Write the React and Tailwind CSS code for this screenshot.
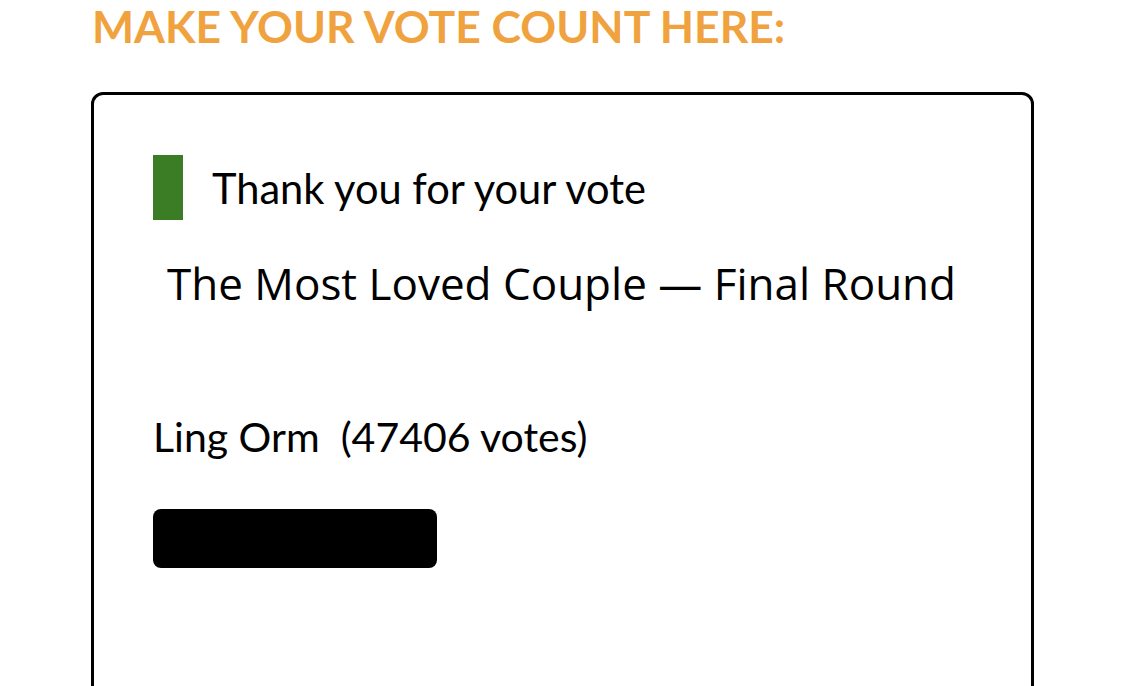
import React from 'react';

const results = [{ name: 'Ling Orm', votes: 47406 }];

export default function App() {
  return (
    <div className="min-h-[686px] bg-white overflow-hidden font-['Lato','Liberation_Sans',sans-serif]">
      <div className="pl-[91px] pr-[91px]">
        <h1 className="pl-[1px] pt-[2px] text-[44.5px] leading-[48px] font-bold text-[#f0a23e]">
          MAKE YOUR VOTE COUNT HERE:
        </h1>

        {/* Vote card */}
        <div className="mt-[42px] w-[943px] h-[640px] border-[3px] border-black rounded-[12px] pl-[59px] pt-[60px]">
          <div className="flex items-center gap-[29px]">
            <div className="w-[30px] h-[65px] bg-[#3a7d24]" />
            <span className="text-[41.6px] leading-[48px] text-black">Thank you for your vote</span>
          </div>

          <h2 className="mt-[37px] ml-[14px] text-[44px] leading-[52px] text-black font-['Open_Sans','Noto_Sans',sans-serif]">
            The Most Loved Couple — Final Round
          </h2>

          {results.map(({ name, votes }) => (
            <div key={name} className="mt-[104px]">
              <div className="text-[41px] leading-[48px] text-black">
                {name}&nbsp;&nbsp;({votes} votes)
              </div>
              <div className="mt-[48px] w-[284px] h-[59px] bg-black rounded-[8px]" />
            </div>
          ))}
        </div>
      </div>
    </div>
  );
}
